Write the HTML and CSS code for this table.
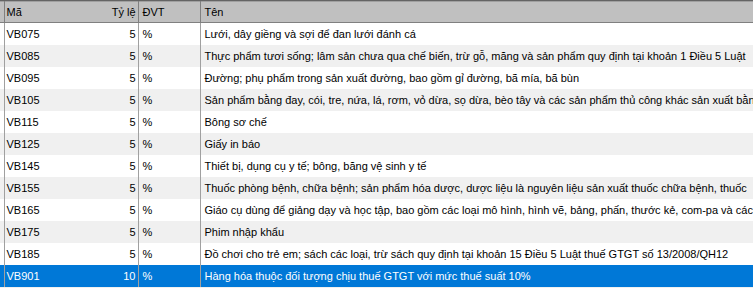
FILE: index.html
```html
<!DOCTYPE html>
<html>
<head>
<meta charset="utf-8">
<link rel="stylesheet" href="styles.css">
</head>
<body>
<div class="grid">
  <table class="tbl">
    <colgroup>
      <col class="w-edge"><col class="w-ma"><col class="w-tyle"><col class="w-dvt"><col class="w-ten">
    </colgroup>
    <thead>
      <tr><th class="edge"></th><th class="ma">Mã</th><th class="tyle">Tỷ lệ</th><th class="dvt">ĐVT</th><th class="ten">Tên</th></tr>
    </thead>
    <tbody>
      <tr class="odd"><td class="edge"></td><td class="ma">VB075</td><td class="tyle">5</td><td class="dvt">%</td><td class="ten">Lưới, dây giềng và sợi để đan lưới đánh cá</td></tr>
      <tr class="even"><td class="edge"></td><td class="ma">VB085</td><td class="tyle">5</td><td class="dvt">%</td><td class="ten">Thực phẩm tươi sống; lâm sản chưa qua chế biến, trừ gỗ, măng và sản phẩm quy định tại khoản 1 Điều 5 Luật</td></tr>
      <tr class="odd"><td class="edge"></td><td class="ma">VB095</td><td class="tyle">5</td><td class="dvt">%</td><td class="ten">Đường; phụ phẩm trong sản xuất đường, bao gồm gỉ đường, bã mía, bã bùn</td></tr>
      <tr class="even"><td class="edge"></td><td class="ma">VB105</td><td class="tyle">5</td><td class="dvt">%</td><td class="ten">Sản phẩm bằng đay, cói, tre, nứa, lá, rơm, vỏ dừa, sọ dừa, bèo tây và các sản phẩm thủ công khác sản xuất bằng</td></tr>
      <tr class="odd"><td class="edge"></td><td class="ma">VB115</td><td class="tyle">5</td><td class="dvt">%</td><td class="ten">Bông sơ chế</td></tr>
      <tr class="even"><td class="edge"></td><td class="ma">VB125</td><td class="tyle">5</td><td class="dvt">%</td><td class="ten">Giấy in báo</td></tr>
      <tr class="odd"><td class="edge"></td><td class="ma">VB145</td><td class="tyle">5</td><td class="dvt">%</td><td class="ten">Thiết bị, dụng cụ y tế; bông, băng vệ sinh y tế</td></tr>
      <tr class="even"><td class="edge"></td><td class="ma">VB155</td><td class="tyle">5</td><td class="dvt">%</td><td class="ten">Thuốc phòng bệnh, chữa bệnh; sản phẩm hóa dược, dược liệu là nguyên liệu sản xuất thuốc chữa bệnh, thuốc</td></tr>
      <tr class="odd"><td class="edge"></td><td class="ma">VB165</td><td class="tyle">5</td><td class="dvt">%</td><td class="ten">Giáo cụ dùng để giảng dạy và học tập, bao gồm các loại mô hình, hình vẽ, bảng, phấn, thước kẻ, com-pa và các</td></tr>
      <tr class="even"><td class="edge"></td><td class="ma">VB175</td><td class="tyle">5</td><td class="dvt">%</td><td class="ten">Phim nhập khẩu</td></tr>
      <tr class="odd"><td class="edge"></td><td class="ma">VB185</td><td class="tyle">5</td><td class="dvt">%</td><td class="ten">Đồ chơi cho trẻ em; sách các loại, trừ sách quy định tại khoản 15 Điều 5 Luật thuế GTGT số 13/2008/QH12</td></tr>
      <tr class="sel"><td class="edge"></td><td class="ma">VB901</td><td class="tyle">10</td><td class="dvt">%</td><td class="ten">Hàng hóa thuộc đối tượng chịu thuế GTGT với mức thuế suất 10%</td></tr>
    </tbody>
  </table>
</div>
</body>
</html>
```

FILE: styles.css
```css
html, body {
  margin: 0;
  padding: 0;
  background: #f0f0f0;
}
.grid {
  width: 753px;
  height: 288px;
  overflow: hidden;
  border-top: 1px solid #646464;
  box-sizing: border-box;
}
.tbl {
  border-collapse: collapse;
  table-layout: fixed;
  width: 900px;
  font-family: "Liberation Sans", Arial, sans-serif;
  font-size: 11px;
  color: #000;
}
.w-edge { width: 4px; }
.w-ma { width: 60px; }
.w-tyle { width: 74px; }
.w-dvt { width: 62px; }
.w-ten { width: 700px; }

th, td {
  padding: 0;
  white-space: nowrap;
  overflow: hidden;
  text-align: left;
}
th {
  height: 20px;
  background: #c0c0c0;
  font-weight: normal;
  border-top: 1px solid #a0a0a0;
  border-bottom: 1px solid #808080;
}
td {
  height: 22px;
}
.edge { border-right: 1px solid #a0a0a0; }
th.edge { border-right: 1px solid #808080; }
.ma { padding-left: 2px; }
.tyle { text-align: right; padding-right: 2px; border-right: 1px solid #a0a0a0; }
th.tyle { border-right: 1px solid #808080; }
.dvt { padding-left: 4px; border-right: 1px solid #a0a0a0; }
th.dvt { border-right: 1px solid #808080; }
.ten { padding-left: 4px; }
tr.odd td { background: #ffffff; }
tr.even td { background: #f0f0f0; }
tr.sel td { background: #0078d7; color: #fff; }
```
